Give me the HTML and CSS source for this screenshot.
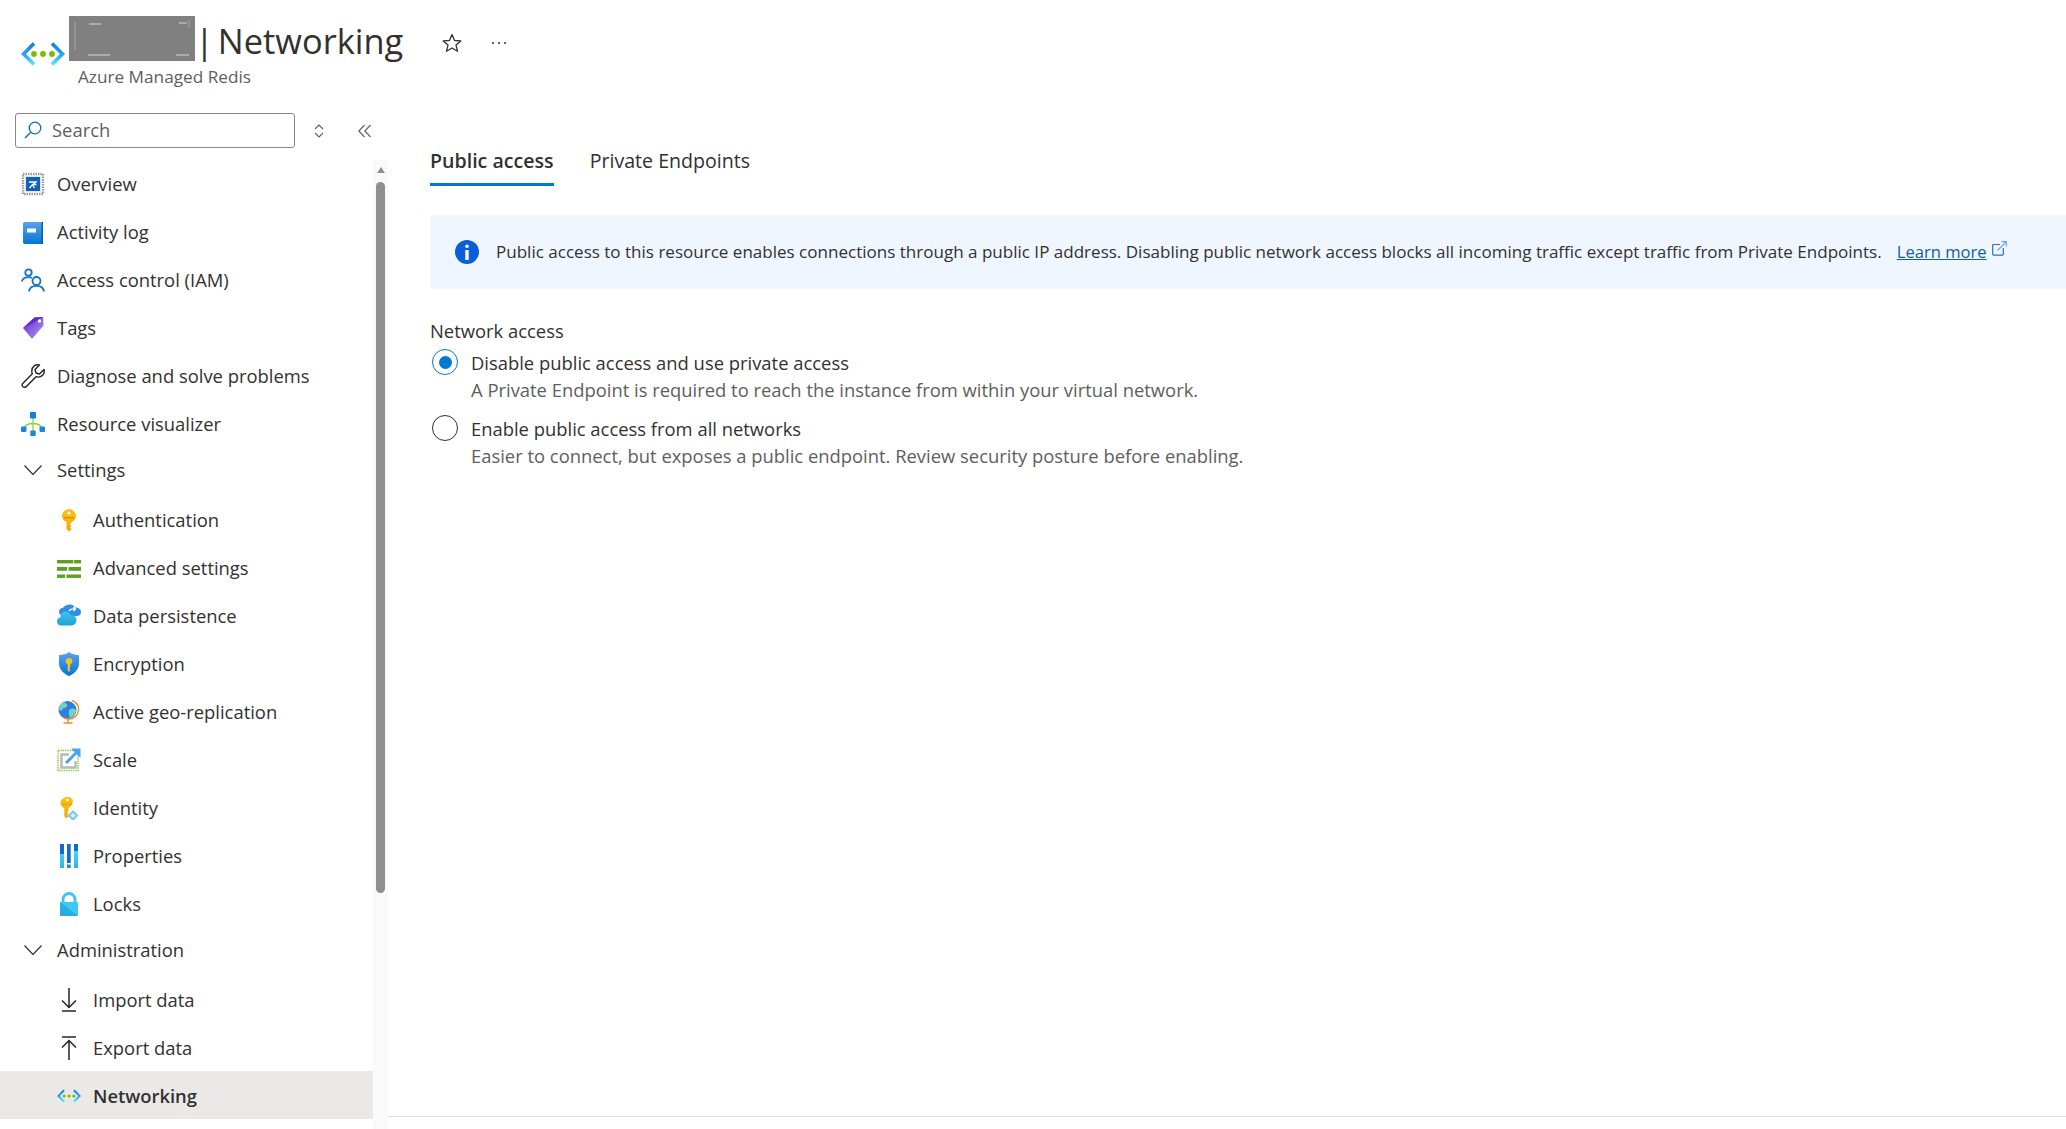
FILE: index.html
```html
<!DOCTYPE html>
<html lang="en">
<head>
<meta charset="utf-8">
<title>Networking</title>
<link rel="stylesheet" href="styles.css">
</head>
<body>
<svg class="defs" aria-hidden="true">
  <defs>
    <linearGradient id="gNet" x1="0" y1="0" x2="0" y2="1"><stop offset="0" stop-color="#0f7fe0"/><stop offset=".5" stop-color="#2aa0f0"/><stop offset="1" stop-color="#50e6ff"/></linearGradient>
    <linearGradient id="gBlue" x1="0" y1="0" x2="0" y2="1"><stop offset="0" stop-color="#5ea0ef"/><stop offset="1" stop-color="#0078d4"/></linearGradient>
    <linearGradient id="gCyan" x1="0" y1="0" x2="0" y2="1"><stop offset="0" stop-color="#50e6ff"/><stop offset="1" stop-color="#29b6e8"/></linearGradient>
    <linearGradient id="gPurple" x1="0" y1="0" x2="1" y2="1"><stop offset="0" stop-color="#5e2bc4"/><stop offset="1" stop-color="#b796f9"/></linearGradient>
    <linearGradient id="gGold" x1="0" y1="0" x2="0" y2="1"><stop offset="0" stop-color="#fec214"/><stop offset="1" stop-color="#f6a800"/></linearGradient>
    <linearGradient id="gCloud" x1="0" y1="0" x2="0" y2="1"><stop offset="0" stop-color="#3cc4f2"/><stop offset="1" stop-color="#1fa3d8"/></linearGradient>
    <symbol id="net" viewBox="0 0 44 24">
      <path d="M13 1.5 2.5 12 13 22.5" fill="none" stroke="url(#gNet)" stroke-width="3.6" stroke-linejoin="miter"/>
      <path d="M31 1.5 41.5 12 31 22.5" fill="none" stroke="url(#gNet)" stroke-width="3.6" stroke-linejoin="miter"/>
      <circle cx="13" cy="12" r="2.9" fill="#7fba00"/><circle cx="22" cy="12" r="2.9" fill="#7fba00"/><circle cx="31" cy="12" r="2.9" fill="#7fba00"/>
    </symbol>
  </defs>
</svg>

<header class="blade-header">
  <svg class="logo"><use href="#net"/></svg>
  <div class="heading">
    <div class="title-row">
      <svg class="redact" viewBox="0 0 126 45" aria-hidden="true">
        <rect width="126" height="45" fill="#808080"/>
        <path d="M19 39h22M107 39h13M20 8h12M110 7h8" stroke="#d6d6d6" stroke-width="1"/>
        <path d="M6 6v28M120 4v8" stroke="#a8a8a8" stroke-width="1"/>
      </svg>
      <h1 class="title">| Networking</h1>
      <svg class="star" viewBox="0 0 20 20"><path d="M10 1.6 12.5 7.4l6.300.6-4.800 4.100 1.500 6.200L10 15l-5.500 3.300L6 12.100 1.200 8l6.300-.6z" fill="none" stroke="#323130" stroke-width="1.300" stroke-linejoin="round"/></svg>
      <span class="dots"><i></i><i></i><i></i></span>
    </div>
    <div class="subtitle">Azure Managed Redis</div>
  </div>
</header>

<div class="blade-body">
  <aside class="sidebar">
    <div class="search-row">
      <div class="search">
        <svg class="search-ico" viewBox="0 0 18 18"><circle cx="11" cy="7" r="5.800" fill="none" stroke="#0f6cbd" stroke-width="1.300"/><path d="M6.800 11.200 1 17" stroke="#0f6cbd" stroke-width="1.400"/></svg>
        <span class="search-text">Search</span>
      </div>
      <svg class="updown" viewBox="0 0 10 14"><path d="M1 5 5 1l4 4M1 9l4 4 4-4" fill="none" stroke="#605e5c" stroke-width="1.100"/></svg>
      <svg class="collapse" viewBox="0 0 13 14"><path d="M6.500 1 .8 7l5.700 6M12.500 1 6.800 7l5.700 6" fill="none" stroke="#605e5c" stroke-width="1.100"/></svg>
    </div>
    <div class="nav-wrap">
      <nav class="nav">
        <a class="item">
          <svg class="ico" viewBox="0 0 24 24"><rect x="2" y="2" width="20" height="20" fill="none" stroke="#9a9a9a" stroke-width="2.400" stroke-dasharray="1.500 1"/><rect x="3.500" y="3.500" width="17" height="17" fill="#dcecf9"/><rect x="5" y="5" width="14" height="14" fill="#0f62b5"/><path d="M8 10h7l-3 2.500h3.500M8.500 16l3-3.500 2 3.500" fill="none" stroke="#fff" stroke-width="1.300"/></svg>
          <span>Overview</span></a>
        <a class="item">
          <svg class="ico" viewBox="0 0 24 24"><g transform="translate(0 1.500)"><path d="M2 2.500C2 1 3 .5 4 .5h17c.6 0 1 .4 1 1v20c0 .6-.4 1-1 1H4c-1 0-2-.6-2-2z" fill="url(#gBlue)"/><rect x="20.500" y=".5" width="1.500" height="22" fill="#0a5ea8"/><rect x="6" y="7" width="9" height="4" fill="#fff"/></g></svg>
          <span>Activity log</span></a>
        <a class="item">
          <svg class="ico" viewBox="0 0 24 24" fill="none" stroke="#1373c9" stroke-width="1.800"><circle cx="7.500" cy="4.500" r="3.200"/><path d="M.8 13.500c1-3.300 3.500-4.300 6.700-4.300 1.500 0 2.500.2 3.500.8"/><circle cx="15.500" cy="13" r="4"/><path d="M8 23.500c.5-3.700 3.500-5.700 7.500-5.700s7 2 7.500 5.700"/></svg>
          <span>Access control (IAM)</span></a>
        <a class="item">
          <svg class="ico" viewBox="0 0 24 24"><path d="M2 12 13.500 1.500 22 1l.5 8.500L11 23z" fill="url(#gPurple)"/><path d="M2 12 13.500 1.500 22 1 10 8z" fill="#5e2bc4"/><circle cx="18.500" cy="5" r="1.700" fill="#fff"/></svg>
          <span>Tags</span></a>
        <a class="item">
          <svg class="ico" viewBox="0 0 24 24"><path d="M23 5.500 18.500 10l-3.500-1-1-3.500L18.500 1C15 0 10.500 2 10.800 7.500c0 1 .2 1.500.5 2.300L1.700 19.500c-1.300 1.500-.3 4 2.300 3.800.6 0 1.200-.4 1.700-1l9.300-9.600c1 .3 1.800.5 2.800.4C22 12.300 24 9 23 5.500z" fill="none" stroke="#252423" stroke-width="1.400" stroke-linejoin="round"/></svg>
          <span>Diagnose and solve problems</span></a>
        <a class="item">
          <svg class="ico" viewBox="0 0 24 24"><path d="M12 5v14M3 17c1-4 5-5.500 9-5.500s8 1.500 9 5.500" fill="none" stroke="#86d633" stroke-width="1.300"/><rect x="9" y="0" width="6" height="6.500" rx="1" fill="#0f7fe0"/><rect x="0" y="14.500" width="5.500" height="5.500" rx="1" fill="#1a86e0"/><rect x="18.500" y="14.500" width="5.500" height="5.500" rx="1" fill="#1a86e0"/><rect x="9.300" y="18.500" width="5.400" height="5.500" rx="1" fill="#1a86e0"/></svg>
          <span>Resource visualizer</span></a>

        <a class="item group">
          <svg class="ico chev" viewBox="0 0 18 10"><path d="M.5.500 9 9.500l8.500-9" fill="none" stroke="#323130" stroke-width="1.200"/></svg>
          <span>Settings</span></a>

        <a class="item sub">
          <svg class="ico" viewBox="0 0 24 24"><path d="M12 1c-3.500 0-7 3-7 7 0 3 2 5 4.500 6V21l2.500 2.500 2.500-2.500-1.500-1.500 1.500-1.500-1.500-1.500 1.500-1.500V14c2.500-1 4.500-3 4.500-6 0-4-3.500-7-7-7z" fill="url(#gGold)"/><circle cx="12" cy="5" r="1.500" fill="#fff"/><rect x="7" y="9" width="10" height="1.500" fill="#e88a00"/></svg>
          <span>Authentication</span></a>
        <a class="item sub">
          <svg class="ico" viewBox="0 0 24 24"><g fill="#5e9f22"><rect x="0" y="4" width="24" height="3.400"/><rect x="0" y="11" width="10" height="3.800"/><rect x="11.500" y="11" width="12.500" height="3.800"/><rect x="0" y="18.500" width="8" height="3.400"/><rect x="9.500" y="18.500" width="14.500" height="3.400"/></g><rect x="16" y="4" width="1.200" height="3.400" fill="#c8e4a8"/></svg>
          <span>Advanced settings</span></a>
        <a class="item sub">
          <svg class="ico" viewBox="0 0 24 24"><path d="M11 2.500c2.500 0 4 1 4.800 3 3-.6 5.800 1.200 6.200 4s-2 4.500-4 4.500H5c-3 0-5-2-5-4 0-2.500 1.800-4 4-4.200C5 3.800 8 2.500 11 2.500z" fill="#2f8fe3" transform="translate(2 -2)"/><path d="M8 7.500c3 0 5 1.500 5.800 3.800 3-.4 5.700 1.500 5.700 5 0 3-2.500 5.200-5 5.200H3.500C1.500 21.500 0 19.500 0 17.500c0-2.500 1.500-4 3.500-4.300C3.500 10 5.500 7.500 8 7.500z" fill="url(#gCloud)"/><path d="M12 7c1.500-2 3.500-2.500 6-2M16.500 3l2 2-2 2" fill="none" stroke="#fff" stroke-width="1.300"/></svg>
          <span>Data persistence</span></a>
        <a class="item sub">
          <svg class="ico" viewBox="0 0 24 24"><path d="M12 0c3 2.200 6 3 9.500 3 .5 0 .5 1 .5 1.500v7C22 17.500 17 22 12 24 7 22 2 17.500 2 11.500v-7C2 4 2 3 2.500 3 6 3 9 2.200 12 0z" fill="url(#gBlue)"/><path d="M12 6c-2 0-3.500 1.500-3.500 3.200 0 1.300 1 2.400 2.200 2.800v6.500l1.300 1.300 1.300-1.300-.8-.9.8-.8-.8-.8.800-.9V12c1.200-.4 2.200-1.500 2.200-2.800C15.500 7.500 14 6 12 6z" fill="#fdc21c"/></svg>
          <span>Encryption</span></a>
        <a class="item sub">
          <svg class="ico" viewBox="0 0 24 24"><circle cx="10.500" cy="10" r="9" fill="#2f7fde"/><path d="M6 2.500c3 0 5 2 4 4s-4 1-4.500 3-3 1-3.500-.5C2.500 5.500 4 3.500 6 2.500zM13 9c2-1 5-.5 6 1 0 4-3 7-6 8-1-3-2-7 0-9z" fill="#6fd1c8"/><path d="M15 .5c4 1.500 7 5 6.500 10-.5 5-5 8.500-10 8.500-2 0-4-.6-5.500-1.500" fill="none" stroke="#f08a24" stroke-width="1.400"/><path d="M11 19v3.500M6.500 23h9" stroke="#f08a24" stroke-width="1.300"/></svg>
          <span>Active geo-replication</span></a>
        <a class="item sub">
          <svg class="ico" viewBox="0 0 24 24"><rect x="1" y="2.500" width="20" height="20" fill="none" stroke="#8cc63f" stroke-width="1.400" stroke-dasharray="1.400 .9"/><path d="M12 6.500H4.500V19.500h14V13" fill="none" stroke="#b8b8b8" stroke-width="2.400"/><path d="M9 15 20 4" stroke="#4ba3ef" stroke-width="3"/><path d="M14 .5h9.500V10z" fill="#4ba3ef"/></svg>
          <span>Scale</span></a>
        <a class="item sub">
          <svg class="ico" viewBox="0 0 24 24"><path d="M10.500 1C7 1 3.500 3.500 3.500 7c0 2.500 1.800 4.300 3.800 5.200V20l2.200 2.500 2-2-1.300-1.300 1.300-1.300-1.300-1.300 1.300-1.300v-3.400c2-.9 3.800-2.700 3.800-5.200C17.500 3.500 14 1 10.500 1z" fill="url(#gGold)"/><circle cx="10.500" cy="4" r="1.300" fill="#fff"/><rect x="5.500" y="7.500" width="10" height="1.200" fill="#e8a800"/><path d="M16 14 21.500 19.500 16 25 10.500 19.500z" fill="#7fc8ee"/><path d="M16 17l2.500 2.500L16 22l-2.500-2.500z" fill="#e4f4fc"/></svg>
          <span>Identity</span></a>
        <a class="item sub">
          <svg class="ico" viewBox="0 0 24 24"><rect x="3" y="0" width="4" height="24" fill="url(#gCyan)"/><rect x="3" y="0" width="4" height="10" fill="#0f6cd0"/><rect x="10" y="0" width="3.700" height="19" fill="#0f6cd0"/><rect x="10" y="20.500" width="3.700" height="3.500" fill="#1a86e0"/><rect x="17" y="0" width="4" height="24" fill="url(#gCyan)"/><rect x="17" y="0" width="4" height="7" fill="#0f6cd0"/></svg>
          <span>Properties</span></a>
        <a class="item sub">
          <svg class="ico" viewBox="0 0 24 24"><path d="M6 11V7.500a6 6 0 0 1 12 0V11" fill="none" stroke="#3cc4f2" stroke-width="2.800"/><rect x="3" y="10" width="18" height="14" rx="1" fill="#3bc8f5"/><path d="M3 10l18 14H3z" fill="#1fa3d8" opacity=".7"/></svg>
          <span>Locks</span></a>

        <a class="item group">
          <svg class="ico chev" viewBox="0 0 18 10"><path d="M.5.500 9 9.500l8.500-9" fill="none" stroke="#323130" stroke-width="1.200"/></svg>
          <span>Administration</span></a>

        <a class="item sub">
          <svg class="ico" viewBox="0 0 24 24"><path d="M12 0v19M5 12.500l7 7 7-7" fill="none" stroke="#252423" stroke-width="1.500"/><path d="M5 23h14" stroke="#252423" stroke-width="1.500"/></svg>
          <span>Import data</span></a>
        <a class="item sub">
          <svg class="ico" viewBox="0 0 24 24"><path d="M12 24V5M5 11.500l7-7 7 7" fill="none" stroke="#252423" stroke-width="1.500"/><path d="M5 1h14" stroke="#252423" stroke-width="1.500"/></svg>
          <span>Export data</span></a>
        <a class="item sub active">
          <svg class="ico"><use href="#net"/></svg>
          <span>Networking</span></a>
      </nav>
      <div class="scrollbar">
        <span class="scroll-up"></span>
        <span class="scroll-thumb"></span>
      </div>
    </div>
  </aside>

  <main class="main">
    <div class="content">
      <div class="tabs">
        <span class="tab selected">Public access</span>
        <span class="tab">Private Endpoints</span>
      </div>
      <div class="info">
        <svg class="info-ico" viewBox="0 0 24 24"><circle cx="12" cy="12" r="12" fill="#0b5ed7"/><circle cx="12" cy="6.300" r="1.800" fill="#fff"/><rect x="10.300" y="10" width="3.400" height="10" fill="#fff"/></svg>
        <span class="info-text">Public access to this resource enables connections through a public IP address. Disabling public network access blocks all incoming traffic except traffic from Private Endpoints.</span>
        <a class="link">Learn more</a>
        <svg class="ext" viewBox="0 0 15 15"><path d="M8 3.500H1.500c-.5 0-.8.300-.8.800v9c0 .5.300.8.800.8h9c.5 0 .8-.3.800-.8V7" fill="none" stroke="#2a6fd6" stroke-width="1.200"/><path d="M5.500 9.500 14 1M9.500.7h4.800v4.800" fill="none" stroke="#6ea8f0" stroke-width="1.200"/></svg>
      </div>
      <div class="field-label">Network access</div>
      <div class="option first">
        <span class="radio on"><span class="radio-dot"></span></span>
        <div class="option-text">
          <div class="option-label">Disable public access and use private access</div>
          <div class="option-desc">A Private Endpoint is required to reach the instance from within your virtual network.</div>
        </div>
      </div>
      <div class="option">
        <span class="radio"></span>
        <div class="option-text">
          <div class="option-label">Enable public access from all networks</div>
          <div class="option-desc">Easier to connect, but exposes a public endpoint. Review security posture before enabling.</div>
        </div>
      </div>
    </div>
    <div class="foot-line"></div>
  </main>
</div>
</body>
</html>
```

FILE: styles.css
```css
* { box-sizing: border-box; }
html, body { margin: 0; height: 100%; }
body {
  width: 2066px;
  height: 1129px;
  overflow: hidden;
  background: #fff;
  color: #323130;
  font-family: "Open Sans", "Noto Sans", sans-serif;
  font-size: 18.4px;
  line-height: 24px;
  display: flex;
  flex-direction: column;
}
.defs { display: block; width: 0; height: 0; }

.blade-header { height: 113px; display: flex; padding-left: 21px; flex: none; }
.logo { width: 44px; height: 24px; margin-top: 42px; flex: none; }
.heading { margin-left: 4px; }
.title-row { display: flex; align-items: flex-start; padding-top: 16px; height: 61px; }
.redact { width: 126px; height: 45px; display: block; flex: none; }
.title { margin: 0; font-size: 34.4px; line-height: 50px; font-weight: 400; color: #323130; white-space: nowrap; word-spacing: -5px; }
.star { width: 20px; height: 20px; margin: 17px 0 0 39px; flex: none; }
.dots { display: flex; gap: 4px; margin: 26px 0 0 30px; flex: none; }
.dots i { width: 2px; height: 2px; border-radius: 50%; background: #323130; }
.subtitle { margin: 5px 0 0 9px; font-size: 17.2px; line-height: 22px; color: #605e5c; }

.blade-body { flex: 1; display: flex; min-height: 0; }
.sidebar { width: 388px; flex: none; display: flex; flex-direction: column; }
.search-row { display: flex; align-items: center; height: 35px; margin-bottom: 12px; padding-left: 15px; flex: none; }
.search { width: 280px; height: 35px; border: 1px solid #8a8886; border-radius: 3px; display: flex; align-items: center; padding: 0 0 1px 8px; }
.search-ico { width: 18px; height: 18px; flex: none; }
.search-text { margin-left: 10px; color: #605e5c; }
.updown { width: 10px; height: 14px; margin-left: 19px; flex: none; }
.collapse { width: 13px; height: 14px; margin-left: 34px; flex: none; }

.nav-wrap { flex: 1; display: flex; min-height: 0; }
.nav { width: 373px; flex: none; }
.item { display: flex; align-items: center; height: 48px; padding-left: 21px; color: #323130; white-space: nowrap; }
.ico { width: 24px; height: 24px; margin-right: 12px; flex: none; }
.chev { width: 18px; height: 10px; margin: 0 15px 0 3px; }
.group { padding-bottom: 4px; }
.sub { padding-left: 57px; }
.active { background: #ebe9e7; font-weight: 600; margin-top: -1px; padding-top: 1px; }

.scrollbar { width: 15px; background: #fafafa; display: flex; flex-direction: column; align-items: center; padding-top: 7px; }
.scroll-up { width: 0; height: 0; border-left: 4.500px solid transparent; border-right: 4.500px solid transparent; border-bottom: 6px solid #8f8f8f; }
.scroll-thumb { width: 9px; height: 711px; margin-top: 9px; border-radius: 5px; background: #8f8f8f; }

.main { flex: 1; min-width: 0; display: flex; flex-direction: column; padding-bottom: 12px; }
.content { padding: 35px 0 0 42px; }
.tabs { display: flex; gap: 36px; font-size: 19.6px; }
.tab { padding: 1px 0 10px; border-bottom: 3px solid transparent; }
.selected { font-weight: 600; border-bottom-color: #0078d4; }
.info { display: flex; align-items: center; height: 74px; margin-top: 29px; background: #eff6ff; border-radius: 3px 0 0 3px; padding-left: 25px; font-size: 17.05px; white-space: nowrap; }
.info-ico { width: 24px; height: 24px; flex: none; }
.info-text { margin-left: 17px; }
.link { margin-left: 15px; font-size: 16.6px; color: #115ea3; text-decoration: underline; }
.ext { width: 15px; height: 15px; margin: -8px 0 0 5px; flex: none; }
.field-label { margin-top: 30px; }
.option { display: flex; margin-top: 15px; }
.first { margin-top: 8px; }
.radio { width: 26px; height: 26px; margin: -2px 13px 0 2px; border: 1.500px solid #323130; border-radius: 50%; flex: none; display: flex; align-items: center; justify-content: center; }
.on { border-color: #0078d4; }
.radio-dot { width: 13px; height: 13px; border-radius: 50%; background: #0078d4; }
.option-desc { margin-top: 3px; color: #605e5c; }
.foot-line { margin-top: auto; height: 1px; background: #e1dfdd; flex: none; }
```
